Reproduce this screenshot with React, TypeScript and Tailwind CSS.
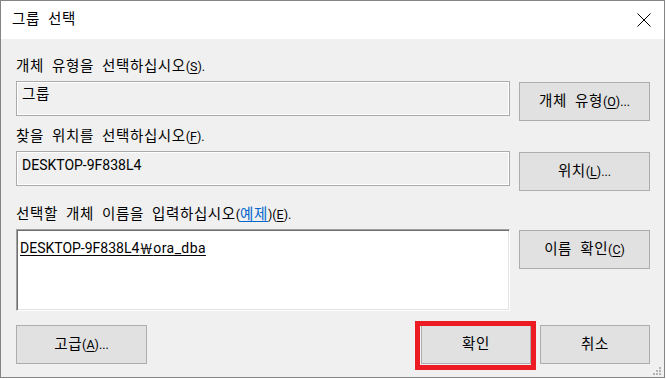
import React from "react";

const FONT = { fontFamily: 'Roboto, "Noto Sans CJK KR", sans-serif' };

function Mn({ k, after = "" }: { k: string; after?: string }) {
  return (
    <span className="text-[12.5px] tracking-normal">
      (<span className="underline underline-offset-2">{k}</span>){after}
    </span>
  );
}

function Btn({ children, className = "" }: { children: React.ReactNode; className?: string }) {
  return (
    <div
      className={
        "h-[39px] shrink-0 bg-[#e1e1e1] border border-[#adadad] flex items-center justify-center text-[14.5px] leading-[20px] tracking-[0.6px] [word-spacing:4px] text-black " +
        className
      }
    >
      <span>{children}</span>
    </div>
  );
}

const LABEL = "h-[20px] text-[14.5px] leading-[20px] tracking-[0.6px] [word-spacing:4px] whitespace-nowrap";

export default function App() {
  return (
    <div className="w-[666px] h-[379px] bg-white relative text-black" style={FONT}>
      <div className="w-[665px] h-[378px] border border-[#858585] flex flex-col relative">
        {/* title bar */}
        <div className="h-[38px] shrink-0 bg-white flex items-center justify-between pl-[11px] pr-[13px]">
          <span className="text-[14.5px] leading-[20px] tracking-[0.6px] [word-spacing:4px]">그룹 선택</span>
          <svg width="14" height="14" viewBox="0 0 14 14">
            <path d="M0.5 0.5 L13.5 13.5 M13.5 0.5 L0.5 13.5" stroke="#000" strokeWidth="1" fill="none" />
          </svg>
        </div>

        {/* content */}
        <div className="flex-1 bg-[#f0f0f0] pl-[15px] pr-[14px] flex flex-col">
          <div className={"mt-[18px] " + LABEL}>
            개체 유형을 선택하십시오<Mn k="S" after="." />
          </div>
          <div className="mt-[4px] h-[40px] flex gap-[9px]">
            <div className="flex-1 h-[35px] border border-[#ababab] shadow-[inset_0_0_0_1px_#ffffff] pt-[3px] pl-[5px] text-[14.5px] leading-[20px] tracking-[0.6px]">
              그룹
            </div>
            <Btn className="w-[131px] mt-[1px]">
              개체 유형<Mn k="O" after="..." />
            </Btn>
          </div>

          <div className={"mt-[6px] " + LABEL}>
            찾을 위치를 선택하십시오<Mn k="F" after="." />
          </div>
          <div className="mt-[4px] h-[40px] flex gap-[9px]">
            <div className="flex-1 h-[35px] border border-[#ababab] shadow-[inset_0_0_0_1px_#ffffff] pt-[3px] pl-[5px] text-[14px] leading-[20px]">
              DESKTOP-9F838L4
            </div>
            <Btn className="w-[131px] mt-[1px]">
              위치<Mn k="L" after="..." />
            </Btn>
          </div>

          <div className={"mt-[14px] " + LABEL}>
            선택할 개체 이름을 입력하십시오
            <span className="text-[12.5px] tracking-normal">(</span>
            <span className="text-[#0066cc] underline decoration-[#0066cc] underline-offset-2">예제</span>
            <span className="text-[12.5px] tracking-normal">)</span>
            <Mn k="E" after="." />
          </div>
          <div className="mt-[4px] h-[82px] flex gap-[9px]">
            <div className="flex-1 h-[82px] bg-white border-t border-l border-b border-r border-t-[#a0a0a0] border-l-[#a0a0a0] border-b-[#ffffff] border-r-[#ffffff] shadow-[inset_1px_1px_0_#6e6e6e,inset_-1px_-1px_0_#e3e3e3] pt-[7px] pl-[3px] text-[14px] leading-[20px]">
              <span className="underline underline-offset-2">
                DESKTOP-9F838L4<span style={{ fontFamily: '"Noto Sans CJK KR", sans-serif' }}>￦</span>
                <span className="tracking-[0.4px]">ora_dba</span>
              </span>
            </div>
            <Btn className="w-[131px] mt-[1px]">
              이름 확인<Mn k="C" />
            </Btn>
          </div>

          <div className="mt-[14px] h-[39px] flex">
            <Btn className="w-[131px]">
              고급<Mn k="A" after="..." />
            </Btn>
            <div className="flex-1" />
            <div className="relative w-[110px]">
              <Btn className="w-[110px]">확인</Btn>
              <div className="absolute -left-[6px] -right-[5px] -top-[4px] -bottom-[6px] border-[5px] border-[#ed1c24] pointer-events-none" />
            </div>
            <Btn className="w-[110px] ml-[9px]">취소</Btn>
          </div>
        </div>

        {/* resize grip */}
        <svg className="absolute right-[3px] bottom-[1px]" width="9" height="9" viewBox="0 0 9 9">
          <rect x="7" y="0" width="2" height="2" fill="#b4b4b4" />
          <rect x="4" y="3" width="2" height="2" fill="#b4b4b4" />
          <rect x="7" y="3" width="2" height="2" fill="#b4b4b4" />
          <rect x="1" y="6" width="2" height="2" fill="#b4b4b4" />
          <rect x="4" y="6" width="2" height="2" fill="#b4b4b4" />
          <rect x="7" y="6" width="2" height="2" fill="#b4b4b4" />
        </svg>
      </div>
    </div>
  );
}
